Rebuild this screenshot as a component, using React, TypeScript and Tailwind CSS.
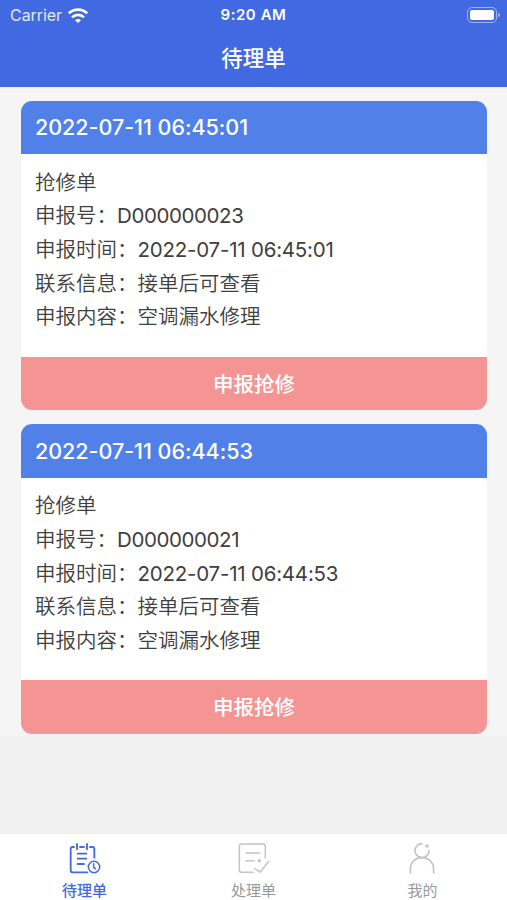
import type { ReactNode } from 'react';

type Order = { id: string; time: string; type: string; contact: string; content: string };

const orders: Order[] = [
  { id: 'D000000023', time: '2022-07-11 06:45:01', type: '抢修单', contact: '接单后可查看', content: '空调漏水修理' },
  { id: 'D000000021', time: '2022-07-11 06:44:53', type: '抢修单', contact: '接单后可查看', content: '空调漏水修理' },
];

function StatusBar() {
  return (
    <div className="grid h-[30px] grid-cols-3 items-center text-white">
      <div className="flex items-center gap-[6px] pl-[10px]">
        <span className="text-[16px] leading-[30px] tracking-[-0.05px] text-white/85">Carrier</span>
        <svg width="20" height="15" viewBox="0 0 60 45" fill="none" stroke="currentColor" strokeWidth="8">
          <path d="M2 16C18 1 42 1 58 16" />
          <path d="M12 28C22 18 38 18 48 28" />
          <path d="M21 37C26 32 34 32 39 37L30 45Z" fill="currentColor" stroke="none" />
        </svg>
      </div>
      <span className="text-center text-[15px] font-semibold leading-[30px] tracking-[0.55px]">9:20 AM</span>
      <div className="flex items-center justify-end gap-[1px] pr-[7px]">
        <div className="h-[16px] w-[30px] rounded-[5px] border border-white/50 p-[2px]">
          <div className="h-full w-full rounded-[2px] bg-white" />
        </div>
        <div className="h-[4px] w-[2px] rounded-r-full bg-white/50" />
      </div>
    </div>
  );
}

function OrderCard({ order }: { order: Order }) {
  return (
    <article className="overflow-hidden rounded-[11px] bg-white">
      <h2 className="flex h-[53.5px] items-center bg-[#5181e8] pl-[14px] text-[21.5px] font-medium tracking-[-0.02px] text-white">
        {order.time}
      </h2>
      <div className="h-[202.5px] pl-[14px] pt-[11.6px] text-[20.5px] font-[350] leading-[33.7px] text-[#404040]">
        <p>{order.type}</p>
        <p>申报号：<span className="font-normal tracking-[-0.4px]">{order.id}</span></p>
        <p>申报时间：<span className="font-normal tracking-[-0.22px]">{order.time}</span></p>
        <p>联系信息：{order.contact}</p>
        <p>申报内容：{order.content}</p>
      </div>
      <button className="block h-[53.5px] w-full bg-[#f49594] pt-[4px] text-center text-[20.5px] font-medium text-white">
        申报抢修
      </button>
    </article>
  );
}

function PendingIcon() {
  return (
    <svg width="33" height="33" viewBox="84 51 99 99" fill="none" stroke="currentColor" strokeWidth="5.5" strokeLinecap="round">
      <path d="M102 66H98Q92 66 92 72V136Q92 142 98 142H142M120 66H132M150 66H157Q163 66 163 72V98" />
      <path d="M111 57V73M141 57V73M113 86H139M113 101H139M113 117H132" />
      <circle cx="162" cy="126" r="17" strokeWidth="4.5" />
      <path d="M161 116V127L166 131" strokeWidth="4.5" />
    </svg>
  );
}

function HandledIcon() {
  return (
    <svg width="33" height="33" viewBox="81 51 99 99" fill="none" stroke="currentColor" strokeWidth="4.5" strokeLinecap="round" strokeLinejoin="round">
      <path d="M130 142H95Q88 142 88 135V64Q88 57 95 57H159Q166 57 166 64V98" />
      <path d="M108 84H149M108 107H132M134 131L151 141L175 110" />
      <circle cx="148" cy="107" r="5" fill="currentColor" stroke="none" />
    </svg>
  );
}

function MineIcon() {
  return (
    <svg width="33" height="33" viewBox="78 51 99 99" fill="none" stroke="currentColor" strokeWidth="5" strokeLinecap="round">
      <path d="M126 56A21 21 0 1 0 147 77" />
      <circle cx="141" cy="63" r="5.5" fill="currentColor" stroke="none" />
      <path d="M91 143V134C91 112 106 98 126 98S161 112 161 134V143" />
    </svg>
  );
}

function Tab({ label, icon, active = false }: { label: string; icon: ReactNode; active?: boolean }) {
  return (
    <button className={`flex flex-col items-center pt-[8px] ${active ? 'text-[#4169e1]' : 'text-[#c4c4c4]'}`}>
      {icon}
      <span className={`mt-[5px] text-[15px] leading-[22px] ${active ? 'font-medium' : 'text-[#999]'}`}>{label}</span>
    </button>
  );
}

export default function App() {
  return (
    <div className="flex h-[900px] w-full flex-col overflow-hidden bg-[#f0f0f0] font-[Inter,'Noto_Sans_CJK_SC',sans-serif]">
      <header className="h-[87px] shrink-0 bg-[#4169e1]">
        <StatusBar />
        <h1 className="text-center text-[21.5px] font-medium leading-[56px] text-white">待理单</h1>
      </header>
      <main className="flex flex-1 flex-col">
        <div className="flex flex-col gap-[14px] bg-[#f5f5f5] pb-[2px] pl-[21px] pr-[20px] pt-[13.5px]">
          {orders.map((order) => (
            <OrderCard key={order.id} order={order} />
          ))}
        </div>
      </main>
      <nav className="grid h-[66px] shrink-0 grid-cols-3 bg-white">
        <Tab label="待理单" icon={<PendingIcon />} active />
        <Tab label="处理单" icon={<HandledIcon />} />
        <Tab label="我的" icon={<MineIcon />} />
      </nav>
    </div>
  );
}
